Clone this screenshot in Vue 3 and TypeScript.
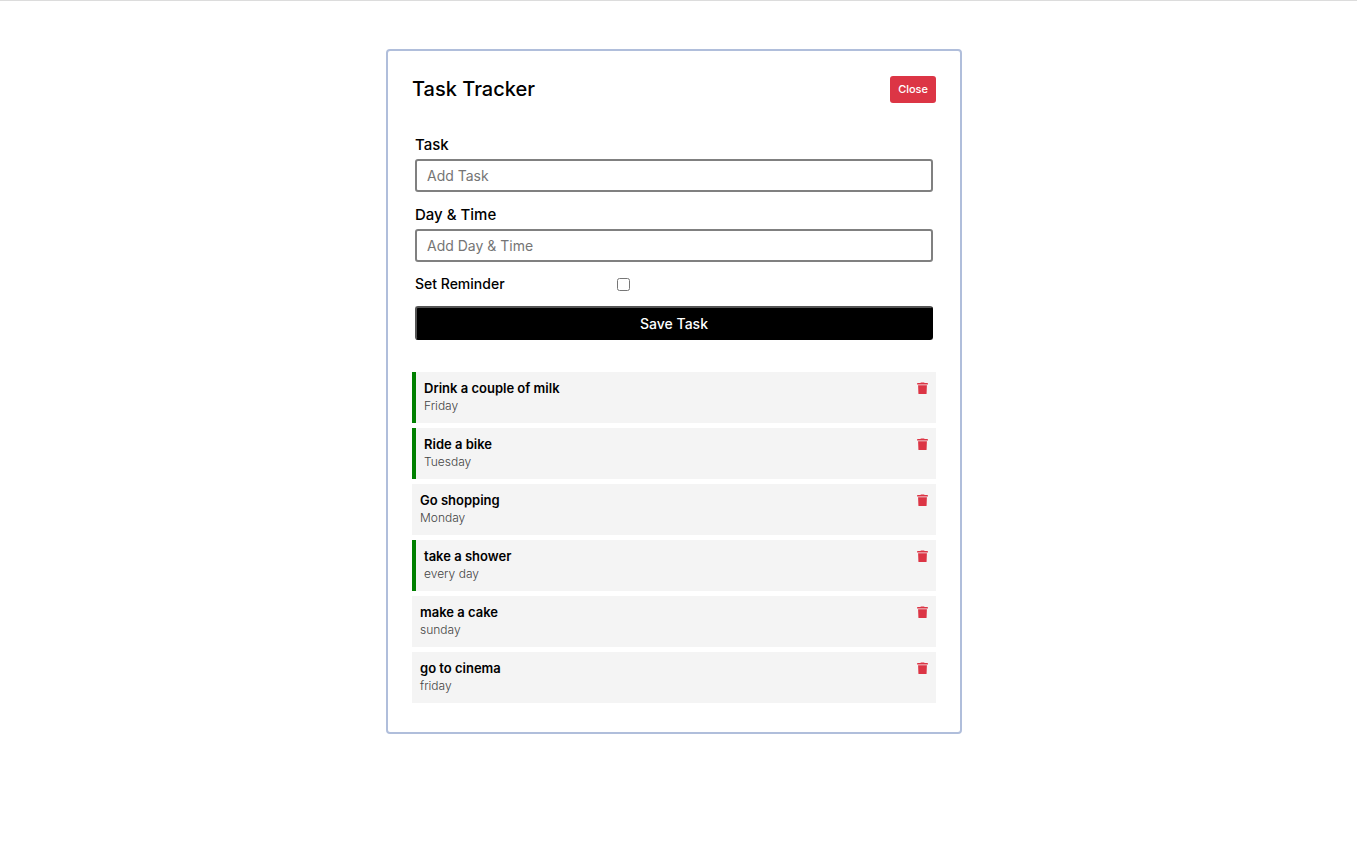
<script setup lang="ts">
import { ref } from 'vue'

interface Task {
  id: number
  text: string
  day: string
  reminder: boolean
}

const tasks = ref<Task[]>([
  { id: 1, text: 'Drink a couple of milk', day: 'Friday', reminder: true },
  { id: 2, text: 'Ride a bike', day: 'Tuesday', reminder: true },
  { id: 3, text: 'Go shopping', day: 'Monday', reminder: false },
  { id: 4, text: 'take a shower', day: 'every day', reminder: true },
  { id: 5, text: 'make a cake', day: 'sunday', reminder: false },
  { id: 6, text: 'go to cinema', day: 'friday', reminder: false },
])

const showForm = ref(true)
const text = ref('')
const day = ref('')
const reminder = ref(false)

function saveTask() {
  if (!text.value) return
  tasks.value.push({ id: Date.now(), text: text.value, day: day.value, reminder: reminder.value })
  text.value = ''
  day.value = ''
  reminder.value = false
}

function removeTask(id: number) {
  tasks.value = tasks.value.filter((task) => task.id !== id)
}
</script>

<template>
  <div class="page">
    <main class="container">
      <header class="header">
        <h1>Task Tracker</h1>
        <button class="toggle" type="button" @click="showForm = !showForm">
          {{ showForm ? 'Close' : 'Add' }}
        </button>
      </header>

      <form v-if="showForm" class="form" @submit.prevent="saveTask">
        <div class="field">
          <label for="task">Task</label>
          <input id="task" v-model="text" type="text" placeholder="Add Task" />
        </div>
        <div class="field">
          <label for="day">Day &amp; Time</label>
          <input id="day" v-model="day" type="text" placeholder="Add Day &amp; Time" />
        </div>
        <div class="check">
          <label for="reminder">Set Reminder</label>
          <input id="reminder" v-model="reminder" type="checkbox" />
        </div>
        <button class="save" type="submit">Save Task</button>
      </form>

      <ul class="tasks">
        <li
          v-for="task in tasks"
          :key="task.id"
          class="task"
          :class="{ reminder: task.reminder }"
          @dblclick="task.reminder = !task.reminder"
        >
          <div>
            <h2>{{ task.text }}</h2>
            <p>{{ task.day }}</p>
          </div>
          <button class="delete" type="button" aria-label="Delete task" @click="removeTask(task.id)">
            <svg viewBox="0 0 11 12" width="11" height="12" aria-hidden="true">
              <path d="M3.400 1 3.900.5h3.200l.5.500H10.500a.4.4 0 0 1 .4.4v1.200H.1V1.400A.4.4 0 0 1 .5 1z" />
              <path d="M1.100 3.300h8.800l-.3 8.100a.6.6 0 0 1-.6.600H2a.6.6 0 0 1-.6-.6z" />
            </svg>
          </button>
        </li>
      </ul>
    </main>
  </div>
</template>

<style>
body {
  margin: 0;
  background: #fff;
}
</style>

<style scoped>
.page {
  padding: 48px 9px 48px 0;
  border-top: 1px solid #dcdcdc;
  color: #000;
  font-family: Inter, "Open Sans", sans-serif;
}

.container {
  box-sizing: border-box;
  max-width: 576px;
  margin: 0 auto;
  padding: 24px;
  border: 2px solid #b0bedb;
  border-radius: 4px;
}

.header {
  display: flex;
  align-items: center;
  justify-content: space-between;
  padding-top: 1px;
}

h1,
h2,
p {
  margin: 0;
}

h1 {
  font-size: 20px;
  font-weight: 500;
  line-height: 27px;
}

button,
input {
  font-family: inherit;
}

.toggle {
  padding: 0 8px;
  border: 0;
  border-radius: 3px;
  background: #dc3545;
  color: #fff;
  font-size: 11px;
  font-weight: 500;
  line-height: 27px;
}

.form {
  display: flex;
  flex-direction: column;
  margin: 31px 3px 32px;
}

.field {
  display: flex;
  flex-direction: column;
  gap: 4px;
  margin-bottom: 12px;
}

label {
  font-size: 15px;
  font-weight: 500;
  line-height: 21px;
}

.field input {
  box-sizing: border-box;
  width: 100%;
  height: 33px;
  padding: 0 10px;
  border: 2px solid #808080;
  border-radius: 3px;
  background: #fff;
  font-size: 14px;
}

.field input::placeholder {
  color: #757575;
}

.check {
  display: flex;
  align-items: center;
  margin-bottom: 12px;
}

.check label {
  flex: 0 0 39%;
  font-size: 14px;
  line-height: 20px;
}

.check input {
  width: 13px;
  height: 13px;
  margin: 0;
}

.save {
  height: 34px;
  padding: 0;
  border: 2px outset #000;
  border-radius: 3px;
  background: #000;
  color: #fff;
  font-size: 14px;
  font-weight: 500;
}

.tasks {
  margin: 0;
  padding: 0;
  list-style: none;
}

.task {
  display: flex;
  align-items: flex-start;
  justify-content: space-between;
  margin-bottom: 5px;
  padding: 7px 8px 9px;
  background: #f4f4f4;
}

.task.reminder {
  border-left: 4px solid green;
}

h2 {
  font-size: 13px;
  font-weight: 600;
  line-height: 19px;
}

p {
  color: #444;
  font-size: 12px;
  font-weight: 300;
  line-height: 16px;
}

.delete {
  display: flex;
  margin-top: 3px;
  padding: 0;
  border: 0;
  background: none;
  color: #dc3545;
}

.delete svg {
  fill: currentColor;
}
</style>
